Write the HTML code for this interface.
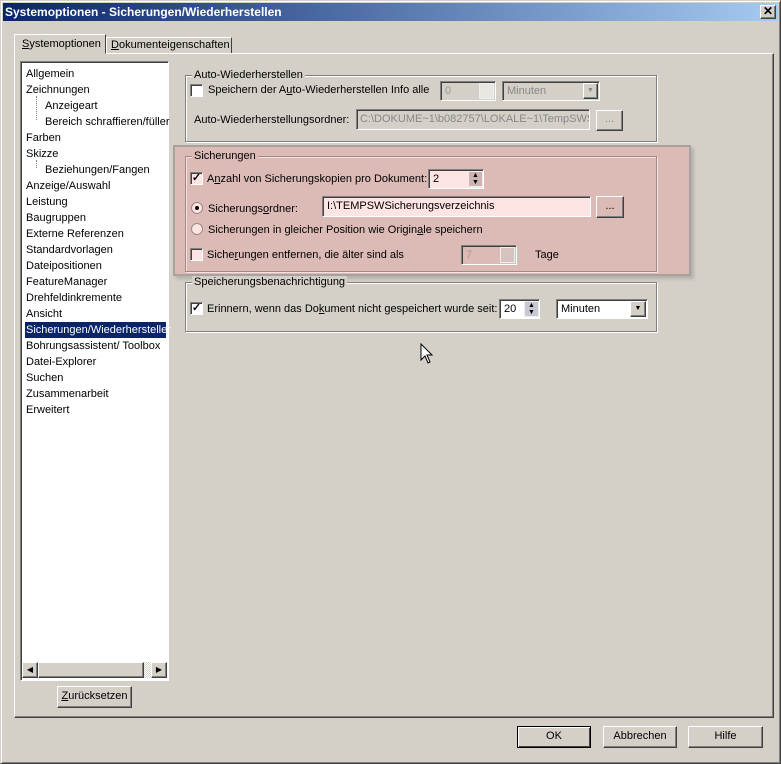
<!DOCTYPE html>
<html><head><meta charset="utf-8"><style>
*{box-sizing:border-box;margin:0;padding:0}
body{width:781px;height:764px;background:#d4d0c8;font-family:"Liberation Sans",sans-serif;font-size:11px;color:#000;position:relative;overflow:hidden}
.a{position:absolute;white-space:nowrap}
.win{position:absolute;left:0;top:0;width:781px;height:764px;border:1px solid #d4d0c8;border-right-color:#404040;border-bottom-color:#404040;box-shadow:inset 1px 1px #fff,inset -1px -1px #808080}
.title{position:absolute;left:3px;top:3px;width:775px;height:18px;background:linear-gradient(90deg,#0a246a,#a6caf0);color:#fff;font-weight:bold;font-size:12px;line-height:18px;padding-left:2px}
.btn{position:absolute;background:#d4d0c8;border:1px solid;border-color:#fff #404040 #404040 #fff;box-shadow:inset -1px -1px #808080;text-align:center}
.sunk{position:absolute;border:1px solid;border-color:#808080 #fff #fff #808080;box-shadow:inset 1px 1px #404040}
.grp{position:absolute;border:1px solid #808080;box-shadow:1px 1px #fff,inset 1px 1px #fff}
.gl{position:absolute;top:-7px;left:6px;padding:0 2px;line-height:12px}
.cb{position:absolute;width:13px;height:13px;background:#fff;border:1px solid;border-color:#808080 #fff #fff #808080;box-shadow:inset 1px 1px #404040;font-size:11px;line-height:10px;text-align:center;font-weight:bold}
.rb{position:absolute;width:12px;height:12px;border-radius:50%;background:#ffe4e4;border:1px solid #9a8a88}
</style></head><body>
<div class="win"></div>
<div class="title">Systemoptionen - Sicherungen/Wiederherstellen</div>
<div class="btn" style="left:760px;top:5px;width:16px;height:14px;font-size:12px;line-height:11px;font-weight:bold">✕</div>

<!-- tabs -->
<div class="a" style="left:14px;top:34px;width:92px;height:20px;border:1px solid;border-color:#fff #404040 transparent #fff;background:#d4d0c8;z-index:2;padding:3px 0 0 7px"><u>S</u>ystemoptionen</div>
<div class="a" style="left:106px;top:37px;width:126px;height:17px;border:1px solid;border-color:#fff #404040 transparent #fff;padding:1px 0 0 4px"><u>D</u>okumenteigenschaften</div>
<div class="a" style="left:14px;top:53px;width:760px;height:665px;border:1px solid;border-color:#fff #404040 #404040 #fff;box-shadow:inset -1px -1px #808080"></div>

<!-- tree -->
<div class="sunk" style="left:20px;top:61px;width:149px;height:620px;background:#fff"></div>
<div class="a" style="left:26px;top:66px;line-height:16px">Allgemein<br>Zeichnungen<br><span style="padding-left:19px">Anzeigeart</span><br><span style="padding-left:19px">Bereich schraffieren/füller</span><br>Farben<br>Skizze<br><span style="padding-left:19px">Beziehungen/Fangen</span><br>Anzeige/Auswahl<br>Leistung<br>Baugruppen<br>Externe Referenzen<br>Standardvorlagen<br>Dateipositionen<br>FeatureManager<br>Drehfeldinkremente<br>Ansicht<br><span style="background:#0a246a;color:#fff;display:inline-block;width:141px;margin-left:-1px;padding-left:1px">Sicherungen/Wiederhersteller</span><br>Bohrungsassistent/ Toolbox<br>Datei-Explorer<br>Suchen<br>Zusammenarbeit<br>Erweitert</div>
<div class="a" style="left:36px;top:96px;width:1px;height:24px;border-left:1px dotted #808080"></div>
<div class="a" style="left:36px;top:160px;width:1px;height:8px;border-left:1px dotted #808080"></div>
<!-- scrollbar -->
<div class="a" style="left:22px;top:662px;width:145px;height:16px;background:#d4d0c8"></div>
<div class="btn" style="left:22px;top:662px;width:16px;height:16px;font-size:8px;line-height:14px">◀</div>
<div class="btn" style="left:38px;top:662px;width:106px;height:16px"></div>
<div class="a" style="left:144px;top:662px;width:7px;height:16px;background:repeating-conic-gradient(#fff 0 25%,#d4d0c8 0 50%) 0 0/2px 2px"></div>
<div class="btn" style="left:151px;top:662px;width:16px;height:16px;font-size:8px;line-height:14px">▶</div>
<div class="btn" style="left:57px;top:686px;width:75px;height:22px;line-height:19px"><u>Z</u>urücksetzen</div>

<!-- Auto group -->
<div class="grp" style="left:185px;top:75px;width:472px;height:67px"><span class="gl" style="background:#d4d0c8">Auto-Wiederherstellen</span></div>
<div class="cb" style="left:190px;top:84px"></div>
<div class="a" style="left:208px;top:84px">Speichern der A<u>u</u>to-Wiederherstellen Info alle</div>
<div class="sunk" style="left:440px;top:81px;width:56px;height:20px;color:#999;padding:3px 4px">0</div>
<div class="a" style="left:479px;top:83px;width:15px;height:16px;background:#e8e6e0;border:1px solid #eee"></div>
<div class="sunk" style="left:502px;top:81px;width:98px;height:20px;color:#888;padding:3px 4px">Minuten</div>
<div class="btn" style="left:583px;top:83px;width:15px;height:16px;font-size:7px;line-height:14px;color:#888">▼</div>
<div class="a" style="left:194px;top:114px">Auto-Wiederherstellungsordner:</div>
<div class="sunk" style="left:356px;top:109px;width:234px;height:21px;color:#888;padding:3px 3px;overflow:hidden">C:\DOKUME~1\b082757\LOKALE~1\TempSWS</div>
<div class="btn" style="left:596px;top:110px;width:27px;height:21px;color:#888;line-height:17px">...</div>

<!-- highlighted box -->
<div class="a" style="left:173px;top:145px;width:518px;height:131px;background:#dcbbb6;border:2px solid #a8a29c;box-shadow:3px 3px 3px rgba(0,0,0,.15)"></div>
<div class="grp" style="left:185px;top:156px;width:472px;height:116px;border-color:#a48884;box-shadow:1px 1px #f4e2e0,inset 1px 1px #f4e2e0"><span class="gl" style="background:#dcbbb6">Sicherungen</span></div>
<div class="cb" style="left:190px;top:172px;background:#ffe4e4">✓</div>
<div class="a" style="left:207px;top:173px"><span>A<u>n</u>zahl von Sicherungskopien pro Dokument:</span></div>
<div class="sunk" style="left:428px;top:169px;width:56px;height:20px;background:#ffe4e4;padding:3px 4px">2</div>
<div class="a" style="left:468px;top:171px;width:15px;height:16px;background:#cfb3b1;border:1px solid #eee;font-size:7px;line-height:7px;text-align:center">▲<br>▼</div>
<div class="rb" style="left:191px;top:202px"><div style="width:4px;height:4px;background:#000;border-radius:50%;margin:3px"></div></div>
<div class="a" style="left:208px;top:203px">Sicherungs<u>o</u>rdner:</div>
<div class="sunk" style="left:322px;top:196px;width:269px;height:21px;background:#ffe4e4;padding:3px 4px">I:\TEMPSWSicherungsverzeichnis</div>
<div class="btn" style="left:596px;top:196px;width:28px;height:22px;background:#dcbbb6;line-height:18px">...</div>
<div class="rb" style="left:191px;top:223px"></div>
<div class="a" style="left:208px;top:224px">Sicherungen in gleicher Position wie Origin<u>a</u>le speichern</div>
<div class="cb" style="left:190px;top:248px;background:#ffe4e4"></div>
<div class="a" style="left:207px;top:249px">Siche<u>r</u>ungen entfernen, die älter sind als</div>
<div class="sunk" style="left:461px;top:245px;width:56px;height:20px;color:#a99;padding:3px 4px">7</div>
<div class="a" style="left:500px;top:247px;width:15px;height:16px;background:#d8c2c0;border:1px solid #eee"></div>
<div class="a" style="left:535px;top:249px">Tage</div>

<!-- notify group -->
<div class="grp" style="left:185px;top:282px;width:472px;height:50px"><span class="gl" style="background:#d4d0c8">Speicherungsbenachrichtigung</span></div>
<div class="cb" style="left:190px;top:302px">✓</div>
<div class="a" style="left:207px;top:303px">Erinnern, wenn das Do<u>k</u>ument nicht gespeichert wurde seit:</div>
<div class="sunk" style="left:499px;top:299px;width:41px;height:20px;background:#fff;padding:3px 4px">20</div>
<div class="a" style="left:524px;top:301px;width:15px;height:16px;background:#c8c8d4;border:1px solid #eee;font-size:7px;line-height:7px;text-align:center">▲<br>▼</div>
<div class="sunk" style="left:556px;top:299px;width:92px;height:20px;background:#fff;padding:3px 4px">Minuten</div>
<div class="btn" style="left:630px;top:301px;width:16px;height:16px;font-size:7px;line-height:14px">▼</div>
<svg class="a" style="left:420px;top:343px" width="14" height="22" viewBox="0 0 14 22"><path d="M1 1 L1 17 L5 13 L8 20 L10 19 L7 12 L12 12 Z" fill="#fff" stroke="#000"/></svg>

<!-- bottom buttons -->
<div class="btn" style="left:517px;top:726px;width:74px;height:22px;line-height:19px;border:1px solid #000;box-shadow:inset 1px 1px #fff,inset -1px -1px #404040">OK</div>
<div class="btn" style="left:603px;top:726px;width:74px;height:22px;line-height:19px">Abbrechen</div>
<div class="btn" style="left:688px;top:726px;width:75px;height:22px;line-height:19px">Hilfe</div>
</body></html>
